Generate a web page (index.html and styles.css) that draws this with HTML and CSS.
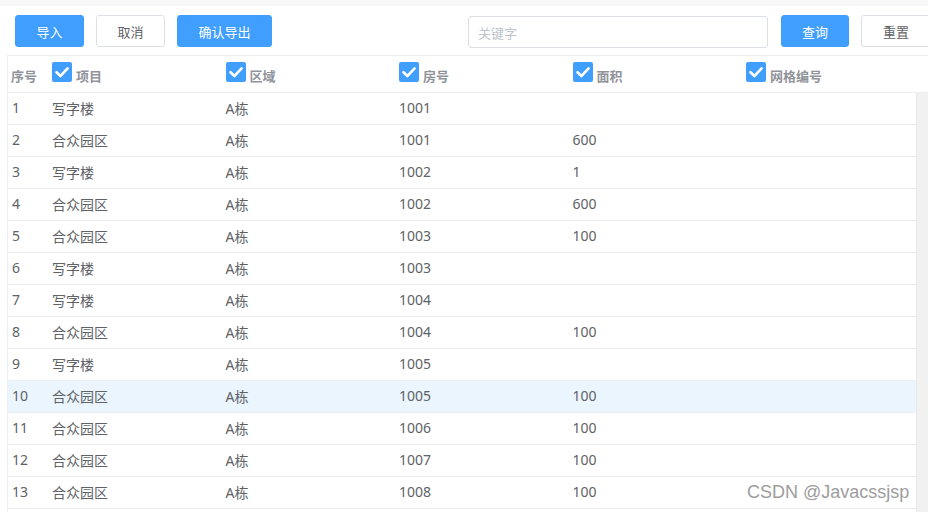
FILE: index.html
```html
<!DOCTYPE html>
<html lang="zh-CN">
<head>
<meta charset="utf-8">
<title>导出</title>
<link rel="stylesheet" href="styles.css">
</head>
<body>
<div class="topstrip"></div>
<div class="toolbar">
  <button class="btn primary w69">导入</button>
  <button class="btn plain w69">取消</button>
  <button class="btn primary w95">确认导出</button>
  <input class="search" type="text" placeholder="关键字">
  <button class="btn primary q">查询</button>
  <button class="btn plain r">重置</button>
</div>
<div class="table">
  <div class="thead">
    <div class="th idx"><span class="tt">序号</span></div>
    <div class="th"><span class="cb"><svg viewBox="0 0 20 20" width="20" height="20"><path d="M4.5 10.2 L8.4 14 L15.6 6.4" fill="none" stroke="#fff" stroke-width="2.6" stroke-linecap="round" stroke-linejoin="round"/></svg></span><span class="tt">项目</span></div>
    <div class="th"><span class="cb"><svg viewBox="0 0 20 20" width="20" height="20"><path d="M4.5 10.2 L8.4 14 L15.6 6.4" fill="none" stroke="#fff" stroke-width="2.6" stroke-linecap="round" stroke-linejoin="round"/></svg></span><span class="tt">区域</span></div>
    <div class="th"><span class="cb"><svg viewBox="0 0 20 20" width="20" height="20"><path d="M4.5 10.2 L8.4 14 L15.6 6.4" fill="none" stroke="#fff" stroke-width="2.6" stroke-linecap="round" stroke-linejoin="round"/></svg></span><span class="tt">房号</span></div>
    <div class="th"><span class="cb"><svg viewBox="0 0 20 20" width="20" height="20"><path d="M4.5 10.2 L8.4 14 L15.6 6.4" fill="none" stroke="#fff" stroke-width="2.6" stroke-linecap="round" stroke-linejoin="round"/></svg></span><span class="tt">面积</span></div>
    <div class="th"><span class="cb"><svg viewBox="0 0 20 20" width="20" height="20"><path d="M4.5 10.2 L8.4 14 L15.6 6.4" fill="none" stroke="#fff" stroke-width="2.6" stroke-linecap="round" stroke-linejoin="round"/></svg></span><span class="tt">网格编号</span></div>
    <div class="th gutter"></div>
  </div>
  <div class="tbody">
    <div class="rows">
      <div class="tr"><div class="td">1</div><div class="td">写字楼</div><div class="td">A栋</div><div class="td">1001</div><div class="td"></div><div class="td"></div></div>
      <div class="tr"><div class="td">2</div><div class="td">合众园区</div><div class="td">A栋</div><div class="td">1001</div><div class="td">600</div><div class="td"></div></div>
      <div class="tr"><div class="td">3</div><div class="td">写字楼</div><div class="td">A栋</div><div class="td">1002</div><div class="td">1</div><div class="td"></div></div>
      <div class="tr"><div class="td">4</div><div class="td">合众园区</div><div class="td">A栋</div><div class="td">1002</div><div class="td">600</div><div class="td"></div></div>
      <div class="tr"><div class="td">5</div><div class="td">合众园区</div><div class="td">A栋</div><div class="td">1003</div><div class="td">100</div><div class="td"></div></div>
      <div class="tr"><div class="td">6</div><div class="td">写字楼</div><div class="td">A栋</div><div class="td">1003</div><div class="td"></div><div class="td"></div></div>
      <div class="tr"><div class="td">7</div><div class="td">写字楼</div><div class="td">A栋</div><div class="td">1004</div><div class="td"></div><div class="td"></div></div>
      <div class="tr"><div class="td">8</div><div class="td">合众园区</div><div class="td">A栋</div><div class="td">1004</div><div class="td">100</div><div class="td"></div></div>
      <div class="tr"><div class="td">9</div><div class="td">写字楼</div><div class="td">A栋</div><div class="td">1005</div><div class="td"></div><div class="td"></div></div>
      <div class="tr hover"><div class="td">10</div><div class="td">合众园区</div><div class="td">A栋</div><div class="td">1005</div><div class="td">100</div><div class="td"></div></div>
      <div class="tr"><div class="td">11</div><div class="td">合众园区</div><div class="td">A栋</div><div class="td">1006</div><div class="td">100</div><div class="td"></div></div>
      <div class="tr"><div class="td">12</div><div class="td">合众园区</div><div class="td">A栋</div><div class="td">1007</div><div class="td">100</div><div class="td"></div></div>
      <div class="tr"><div class="td">13</div><div class="td">合众园区</div><div class="td">A栋</div><div class="td">1008</div><div class="td">100</div><div class="td"></div></div>
      <div class="tr"><div class="td"></div><div class="td"></div><div class="td"></div><div class="td"></div><div class="td"></div><div class="td"></div></div>
    </div>
    <div class="scrollbar"></div>
  </div>
</div>
<div class="watermark">CSDN @Javacssjsp</div>
</body>
</html>
```
FILE: styles.css
```css
* { box-sizing: border-box; }
html, body { margin: 0; padding: 0; }
body {
  width: 928px;
  height: 512px;
  overflow: hidden;
  background: #fff;
  font-family: "Noto Sans", "Noto Sans CJK SC", sans-serif;
  position: relative;
}
.topstrip { height: 6px; background: #f7f7f8; }
.toolbar {
  display: flex;
  align-items: flex-start;
  padding: 9px 0 0 15px;
  height: 49px;
  white-space: nowrap;
}
.btn {
  flex: none;
  height: 32px;
  border-radius: 3px;
  font-family: "Noto Sans CJK SC", sans-serif;
  font-size: 13px;
  line-height: 1;
  padding: 0;
  margin-right: 12px;
  cursor: pointer;
}
.btn.primary { background: #409eff; border: 1px solid #409eff; color: #fff; }
.btn.plain { background: #fff; border: 1px solid #dcdfe6; color: #606266; }
.w69 { width: 69px; }
.w95 { width: 95px; }
.search {
  flex: none;
  margin-left: 184px;
  margin-top: 1px;
  width: 300px;
  height: 32px;
  border: 1px solid #dcdfe6;
  border-radius: 3px;
  padding: 0 9px;
  font-family: "Noto Sans CJK SC", sans-serif;
  font-size: 13px;
  color: #606266;
  outline: none;
  margin-right: 13px;
}
.search::placeholder { color: #c0c4cc; }
.btn.q { width: 68px; }
.btn.r { width: 70px; margin-right: 0; }

.table {
  margin-left: 7px;
  border-left: 1px solid #ebeef5;
  border-top: 1px solid #ebeef5;
}
.thead {
  display: grid;
  grid-template-columns: 40px repeat(5, 173.5px) 1fr;
  height: 37px;
  border-bottom: 1px solid #ebeef5;
}
.th {
  display: flex;
  align-items: flex-end;
  padding: 0 0 10px 4px;
  color: #909399;
  font-family: "Noto Sans CJK SC", sans-serif;
  font-weight: 700;
  font-size: 13px;
}
.th.idx { padding-left: 3px; }
.cb {
  width: 20px;
  height: 20px;
  border-radius: 2px;
  background: #409eff;
  margin-right: 4px;
  margin-bottom: 0;
  flex: none;
  display: block;
}
.cb svg { display: block; }
.tt { line-height: 13px; display: block; margin-bottom: 0; }

.tbody { display: flex; }
.rows { width: 908px; flex: none; }
.tr {
  display: grid;
  grid-template-columns: 40px repeat(5, 173.5px);
  height: 32px;
  border-bottom: 1px solid #ebeef5;
}
.tr.hover { background: #eaf5fd; }
.td {
  display: flex;
  align-items: center;
  padding: 0 0 2px 4px;
  color: #606266;
  font-size: 14px;
}
.scrollbar {
  width: 12px;
  flex: none;
  background: #f1f1f1;
  border-left: 1px solid #e8e8e8;
}
.watermark {
  position: absolute;
  left: 747px;
  top: 482px;
  font-family: "Liberation Sans", Arial, sans-serif;
  font-size: 18px;
  color: #9d9d9d;
  text-shadow: 0 0 1px #fff;
  white-space: nowrap;
}
```
